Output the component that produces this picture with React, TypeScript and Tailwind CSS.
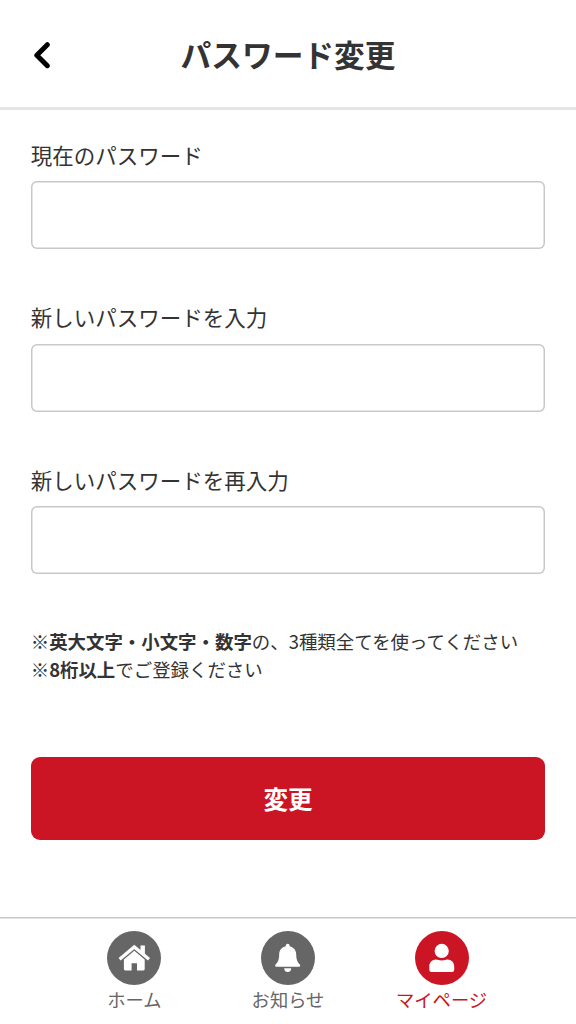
import type { ReactNode } from 'react';

const fields = [
  { id: 'current', label: '現在のパスワード' },
  { id: 'new', label: '新しいパスワードを入力' },
  { id: 'confirm', label: '新しいパスワードを再入力' },
];

function HomeIcon() {
  return (
    <svg viewBox="0 0 54 54" className="h-full w-full" fill="#fff">
      <path d="M12.6 28.2 27.3 15.9 42 28.2" fill="none" stroke="#fff" strokeWidth="3.3" />
      <path d="M33.5 14.5h4.4v10.800L33.500 21.400z" />
      <path d="M27.300 19.800 37.700 28.500v9.600a1.300 1.300 0 0 1-1.300 1.300h-6.400v-7.200h-5.400v7.200H18.200a1.300 1.300 0 0 1-1.300-1.300v-9.600z" />
    </svg>
  );
}

function BellIcon() {
  return (
    <svg viewBox="0 0 54 54" className="h-full w-full" fill="#fff">
      <path d="M26.700 12.700c1.100 0 1.900.8 1.900 1.900v.7c4 .9 6.600 4 6.600 8.200 0 4.800 1.200 7.900 3.600 10.100.8.900.5 2.200-.8 2.200H15.400c-1.300 0-1.600-1.300-.8-2.200 2.400-2.200 3.600-5.300 3.600-10.100 0-4.200 2.600-7.300 6.600-8.200v-.7c0-1.100.8-1.900 1.900-1.900z" />
      <path d="M23.200 37.300h7a3.500 3.700 0 0 1-7 0z" />
    </svg>
  );
}

function UserIcon() {
  return (
    <svg viewBox="0 0 54 54" className="h-full w-full" fill="#fff">
      <circle cx="26.7" cy="19.9" r="7.1" />
      <path d="M21 28.5c2 0 2.8 1 5.7 1s3.7-1 5.7-1c4 0 6.8 3 6.8 6.9v3.4a2.2 2.2 0 0 1-2.2 2.2H16.500a2.200 2.200 0 0 1-2.200-2.200v-3.400c0-3.900 2.700-6.900 6.700-6.900z" />
    </svg>
  );
}

function NavItem({ label, icon, active }: { label: string; icon: ReactNode; active?: boolean }) {
  return (
    <a href="#" className={`flex w-[153.6px] flex-col items-center ${active ? 'text-[#cb1524]' : 'text-[#666]'}`}>
      <span className={`h-[54px] w-[54px] rounded-full ${active ? 'bg-[#cb1524]' : 'bg-[#666]'}`}>{icon}</span>
      <span className="text-[18.3px] leading-[28px] whitespace-nowrap">{label}</span>
    </a>
  );
}

export default function App() {
  return (
    <div className="flex h-[1024px] w-full flex-col bg-white font-['Noto_Sans_CJK_JP',sans-serif] text-[#333]">
      <header className="grid h-[110.4px] shrink-0 grid-cols-[80px_1fr_80px] items-center border-b-3 border-[#e5e5e5]">
        <button type="button" aria-label="戻る" className="pt-[3px] pl-[32px]">
          <svg viewBox="0 0 20 28" className="h-[28px] w-[20px]" fill="none" stroke="#000" strokeWidth="5" strokeLinecap="round" strokeLinejoin="round">
            <path d="M15.3 3.7 4.8 14.2 15.3 24.7" />
          </svg>
        </button>
        <h1 className="text-center text-[30.72px] leading-[46px] font-bold">パスワード変更</h1>
      </header>

      <form className="flex-1 px-[30.72px] pt-[28.2px]">
        {fields.map((field) => (
          <div key={field.id} className="mb-[52.5px]">
            <label htmlFor={field.id} className="block text-[21.5px] leading-[32px]">{field.label}</label>
            <input
              id={field.id}
              type="password"
              className="mt-[10.3px] block h-[68px] w-full rounded-[6px] px-4 shadow-[inset_0_0_0_1.5px_#c8c8c8] outline-none"
            />
          </div>
        ))}
        <p className="mt-[54px] text-[18.43px] leading-[27.65px]">
          ※<b>英大文字・小文字・数字</b>の、3種類全てを使ってください
          <br />
          ※<b>8桁以上</b>でご登録ください
        </p>
        <button type="button" className="mt-[73px] block h-[83px] w-full rounded-[9px] bg-[#cb1524] text-[24.58px] font-bold text-white">
          変更
        </button>
      </form>

      <nav className="flex h-[107.5px] shrink-0 justify-center pt-[14.5px] shadow-[inset_0_1.5px_0_#c8c8c8]">
        <NavItem label="ホーム" icon={<HomeIcon />} />
        <NavItem label="お知らせ" icon={<BellIcon />} />
        <NavItem label="マイページ" icon={<UserIcon />} active />
      </nav>
    </div>
  );
}
